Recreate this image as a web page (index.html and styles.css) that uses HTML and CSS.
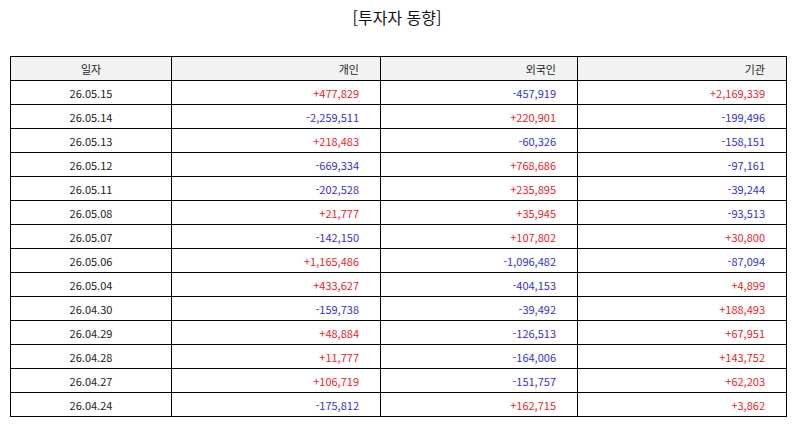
FILE: index.html
```html
<!DOCTYPE html>
<html lang="ko">
<head>
<meta charset="utf-8">
<link rel="stylesheet" href="styles.css">
</head>
<body>
<h1 class="title">[투자자 동향]</h1>
<table class="flow">
<colgroup><col class="c-date"><col class="c-ind"><col class="c-for"><col class="c-inst"></colgroup>
<thead>
<tr><th class="center">일자</th><th>개인</th><th>외국인</th><th>기관</th></tr>
</thead>
<tbody>
<tr><td class="center">26.05.15</td><td class="up">+477,829</td><td class="down">-457,919</td><td class="up">+2,169,339</td></tr>
<tr><td class="center">26.05.14</td><td class="down">-2,259,511</td><td class="up">+220,901</td><td class="down">-199,496</td></tr>
<tr><td class="center">26.05.13</td><td class="up">+218,483</td><td class="down">-60,326</td><td class="down">-158,151</td></tr>
<tr><td class="center">26.05.12</td><td class="down">-669,334</td><td class="up">+768,686</td><td class="down">-97,161</td></tr>
<tr><td class="center">26.05.11</td><td class="down">-202,528</td><td class="up">+235,895</td><td class="down">-39,244</td></tr>
<tr><td class="center">26.05.08</td><td class="up">+21,777</td><td class="up">+35,945</td><td class="down">-93,513</td></tr>
<tr><td class="center">26.05.07</td><td class="down">-142,150</td><td class="up">+107,802</td><td class="up">+30,800</td></tr>
<tr><td class="center">26.05.06</td><td class="up">+1,165,486</td><td class="down">-1,096,482</td><td class="down">-87,094</td></tr>
<tr><td class="center">26.05.04</td><td class="up">+433,627</td><td class="down">-404,153</td><td class="up">+4,899</td></tr>
<tr><td class="center">26.04.30</td><td class="down">-159,738</td><td class="down">-39,492</td><td class="up">+188,493</td></tr>
<tr><td class="center">26.04.29</td><td class="up">+48,884</td><td class="down">-126,513</td><td class="up">+67,951</td></tr>
<tr><td class="center">26.04.28</td><td class="up">+11,777</td><td class="down">-164,006</td><td class="up">+143,752</td></tr>
<tr><td class="center">26.04.27</td><td class="up">+106,719</td><td class="down">-151,757</td><td class="up">+62,203</td></tr>
<tr><td class="center">26.04.24</td><td class="down">-175,812</td><td class="up">+162,715</td><td class="up">+3,862</td></tr>
</tbody>
</table>
</body>
</html>
```
FILE: styles.css
```css
html, body {
  margin: 0;
  padding: 0;
  background: #ffffff;
}
body {
  font-family: "Noto Sans CJK KR", "Noto Sans", sans-serif;
  color: #222222;
}
.title {
  margin: 0;
  padding-top: 5px;
  height: 56px;
  box-sizing: border-box;
  text-align: center;
  font-size: 16px;
  font-weight: 400;
  line-height: 24px;
  color: #111111;
}
.flow {
  margin-left: 10px;
  width: 776px;
  border-collapse: collapse;
  table-layout: fixed;
  font-size: 11px;
}
.c-date { width: 161px; }
.c-ind { width: 209px; }
.c-for { width: 197px; }
.c-inst { width: 209px; }
.flow th, .flow td {
  border: 1px solid #000000;
  height: 24px;
  box-sizing: border-box;
  padding: 0 21px 0 4px;
  text-align: right;
  font-weight: 400;
  line-height: 14px;
  vertical-align: middle;
}
.flow th {
  background: #f2f2f2;
  color: #222222;
}
.flow .center {
  text-align: center;
  padding: 0 4px;
}
.up { color: #e8232b; }
.down { color: #3333cc; }
```
